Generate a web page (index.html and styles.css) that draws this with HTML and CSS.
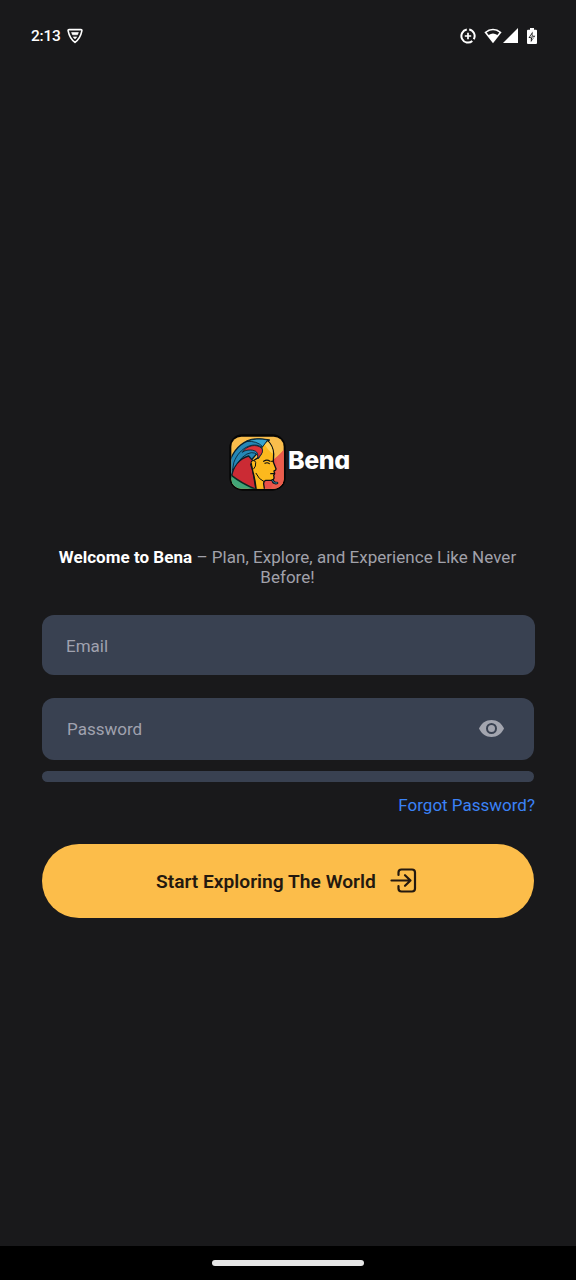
FILE: index.html
```html
<!DOCTYPE html>
<html lang="en">
<head>
<meta charset="utf-8">
<title>Bena</title>
<link rel="stylesheet" href="styles.css">
</head>
<body>
<div class="screen">
  <header class="status-bar">
    <div class="status-left">
      <span class="clock">2:13</span>
      <svg class="shield" width="16" height="16" viewBox="0 0 16 16" fill="none" stroke="#fff" stroke-linejoin="round">
        <path d="M2.2 1.6h11.6q1.5 0 1 1.5Q13.300 10.500 8 14.400 2.700 10.500 1.200 3.100q-.5-1.500 1-1.500z" stroke-width="1.6"/>
        <path d="M4.600 4.500h6.800L10.500 6.800h-5zM6.200 8.900h3.600L8 11z" fill="#fff" stroke-width=".6"/>
      </svg>
    </div>
    <div class="status-right">
      <svg class="saver" width="16" height="16" viewBox="0 0 16 16" fill="none" stroke="#fff">
        <path d="M9.200 1.500A6.600 6.600 0 0 1 13.800 11.200M12.300 13A6.600 6.600 0 1 1 6.800 1.500" stroke-width="2"/>
        <path d="M8 4.800v6.400M4.800 8h6.400" stroke-width="1.700"/>
      </svg>
      <svg class="wifi" width="18" height="16" viewBox="0 0 18 16">
        <path d="M9 15.200L.4 4.200Q9-2.600 17.600 4.200z" fill="#fff"/>
        <path d="M2.700 4.600Q9 0 15.300 4.600L13.400 6.900Q9 3.900 4.600 6.900z" fill="#19191b"/>
      </svg>
      <svg class="signal" width="15" height="15" viewBox="0 0 15 15"><path d="M15 0v15H0z" fill="#fff"/></svg>
      <svg class="battery" width="10" height="16" viewBox="0 0 10 16">
        <path d="M3 0h4v1.800h2q1 0 1 1V15q0 1-1 1H1q-1 0-1-1V2.800q0-1 1-1h2z" fill="#fff"/>
        <path d="M5.600 3.400L1.500 9.900h2.300v4.400l4.500-6.600H5.600z" fill="#19191b"/>
        <path d="M5 6.500L3.500 9h3L5.100 11.500" fill="none" stroke="#fff" stroke-width=".9"/>
      </svg>
    </div>
  </header>

  <main class="login">
    <div class="brand">
      <svg class="brand-mark" width="57" height="57" viewBox="15 12 171 171" stroke-linejoin="round" stroke-linecap="round">
        <defs>
          <clipPath id="tile"><rect x="22" y="20" width="157" height="156" rx="30"/></clipPath>
        </defs>
        <rect x="16" y="13" width="169" height="169" rx="39" fill="#050505"/>
        <g clip-path="url(#tile)">
          <path d="M16 13h169v169H16z" fill="#f9bd4c"/>
          <path d="M185 52Q163 80 140 94L112 182h73z" fill="#e9504a"/>
          <path d="M185 54Q172 74 156 84 164 125 138 182h47z" fill="#ea5c4d"/>
          <!-- hair behind the face -->
          <path d="M16 98C30 54 62 24 108 27L136 30 112 56 82 90 30 120 16 150z" fill="#2587b6" stroke="#08202e" stroke-width="4"/>
          <path d="M22 142C28 106 44 86 74 78L86 92 80 104 86 120 96 180Q50 168 22 142z" fill="#cb2b34" stroke="#08202e" stroke-width="4"/>
          <!-- face and neck -->
          <path d="M104 82Q110 46 131 32 148 48 149 72L148 96 156 116Q157 121 150 123L152 131 149 136Q153 149 143 151L125 151Q118 153 119 162L122 182H97Q94 150 85 118L82 96z" fill="#fcb91d" stroke="#0c1013" stroke-width="4"/>
          <path d="M131 34Q147 50 147 72 132 62 122 43z" fill="#ffd057"/>
          <!-- front strands -->
          <path d="M30 96C46 52 90 34 113 52Q121 64 103 86 104 68 82 68 56 70 26 120z" fill="#2587b6" stroke="#08202e" stroke-width="2.500"/>
          <path d="M56 66C68 46 98 40 113 55 121 66 108 78 100 85 105 68 96 61 80 60 68 60 62 62 56 66z" fill="#dc343a" stroke="#08202e" stroke-width="2.500"/>
          <path d="M68 34Q98 22 131 30L116 50Q99 32 68 34z" fill="#35a4ce" stroke="#08202e" stroke-width="2.500"/>
          <path d="M82 95Q91 87 95 97 97 109 89 117" fill="#fcb91d" stroke="#0c1013" stroke-width="3"/>
          <path d="M16 131Q54 163 102 180H16z" fill="#42a577" stroke="#082a22" stroke-width="5"/>
          <path d="M96 130Q104 148 120 155" fill="none" stroke="#111" stroke-width="3"/>
          <path d="M119 94Q129 87 138 94M123 100Q130 96 136 101M143 94l6-1M140 131h11" fill="none" stroke="#111" stroke-width="3.500"/>
          <path d="M146 151q2 10 13 8" fill="none" stroke="#111" stroke-width="8"/>
          <path d="M146 152q3 9 13 7" fill="none" stroke="#3394bd" stroke-width="3"/>
        </g>
      </svg>
      <span class="brand-name">Bena</span>
    </div>

    <p class="welcome"><strong>Welcome to Bena</strong> – Plan, Explore, and Experience Like Never Before!</p>

    <div class="field field-email"><span>Email</span></div>
    <div class="field field-password">
      <span>Password</span>
      <svg class="eye" width="25" height="17" viewBox="0 0 25 17">
        <path d="M12.500 0C7 0 2.300 3.400 0 8.500 2.300 13.600 7 17 12.500 17S22.700 13.600 25 8.500C22.700 3.400 18 0 12.500 0z" fill="#a3a5af"/>
        <circle cx="12.500" cy="8.500" r="4.500" fill="#a3a5af" stroke="#394151" stroke-width="2"/>
      </svg>
    </div>
    <div class="strength"></div>
    <a class="forgot">Forgot Password?</a>
    <div class="submit" role="button">
      <span>Start Exploring The World</span>
      <svg class="enter" width="27" height="25" viewBox="0 0 27 25" fill="none" stroke="#24190f" stroke-width="2.200" stroke-linecap="round" stroke-linejoin="round">
        <path d="M8.500 7V4.500q0-3 3-3H22q3 0 3 3v16q0 3-3 3H11.500q-3 0-3-3V18M1.500 12.500H20.500M15 7.200l5.500 5.300L15 17.800"/>
      </svg>
    </div>
  </main>

  <footer class="nav-bar"><div class="nav-handle"></div></footer>
</div>
</body>
</html>
```
FILE: styles.css
```css
* { box-sizing: border-box; }
body { margin: 0; background: #19191b; }
.screen {
  width: 576px;
  height: 1280px;
  display: flex;
  flex-direction: column;
  background: #19191b;
  color: #fff;
  font-family: Roboto, sans-serif;
}
svg { display: block; flex: none; }
.status-bar {
  height: 71px;
  padding: 0 39px 0 31px;
  display: flex;
  align-items: center;
  justify-content: space-between;
}
.status-left, .status-right { display: flex; align-items: center; }
.clock { font-size: 15.500px; line-height: 20px; font-weight: 500; letter-spacing: -0.2px; }
.shield { margin-left: 6px; }
.wifi { margin-left: 8px; }
.signal { margin-left: 1px; }
.battery { margin: 0 0.5px 0 9px; }
.login {
  flex: 1;
  padding: 363px 42px 0 42px;
  display: flex;
  flex-direction: column;
}
.brand { height: 57px; margin-left: 187px; display: flex; align-items: flex-start; }
.brand-name {
  margin: 9px 0 0 2px;
  font-family: Inter, sans-serif;
  font-weight: 800;
  font-size: 25px;
  line-height: 34px;
  letter-spacing: -0.4px;
  font-feature-settings: "cv11";
}
.welcome {
  margin: 56px 1px 0 0;
  text-align: center;
  font-size: 17px;
  line-height: 20px;
  letter-spacing: 0.03px;
  color: #a1a1aa;
}
.welcome strong { color: #fff; font-weight: 700; }
.field {
  display: flex;
  align-items: center;
  justify-content: space-between;
  background: #394151;
  border-radius: 12px;
  color: #a0a2af;
  font-size: 17px;
  line-height: 20px;
}
.field-email { height: 60px; margin: 28px -1px 0 0; padding: 2px 0 0 24px; }
.field-password { height: 62px; margin-top: 23px; padding: 0 30px 0 25px; }
.eye { margin-bottom: 1px; }
.strength { height: 11px; margin-top: 11px; border-radius: 6px; background: #394151; }
.forgot {
  margin: 13px -1px 0 0;
  align-self: flex-end;
  font-size: 17px;
  line-height: 20px;
  color: #3b82f6;
}
.submit {
  height: 74px;
  margin-top: 29px;
  padding-left: 114px;
  display: flex;
  align-items: center;
  border-radius: 37px;
  background: #fcbd4a;
  color: #24190f;
  font-size: 19.200px;
  line-height: 24px;
  font-weight: 600;
}
.submit span { padding-top: 2px; }
.enter { margin: 0 0 1px 14px; }
.nav-bar {
  height: 34px;
  display: flex;
  align-items: center;
  justify-content: center;
  background: #000;
}
.nav-handle { width: 152px; height: 6px; border-radius: 3px; background: #e6e6e6; }
```
